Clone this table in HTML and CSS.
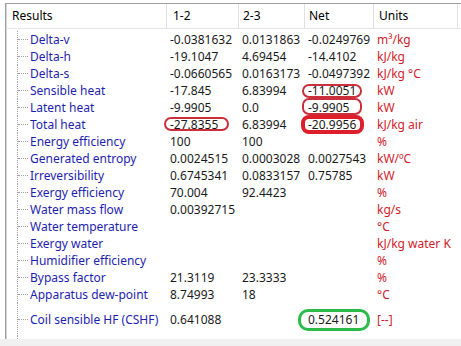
FILE: index.html
```html
<!DOCTYPE html>
<html>
<head>
<meta charset="utf-8">
<link rel="stylesheet" href="styles.css">
</head>
<body>
<div class="list">
  <div class="head">
    <div class="hc">Results</div>
    <div class="hc">1-2</div>
    <div class="hc nar">2-3</div>
    <div class="hc nar">Net</div>
    <div class="hc mid">Units</div>
    <div class="hc"></div>
  </div>
  <div class="rows">
    <div class="row"><div class="name">Delta-v</div><div class="v">-0.0381632</div><div class="v">0.0131863</div><div class="v">-0.0249769</div><div class="u">m³/kg</div></div>
    <div class="row"><div class="name">Delta-h</div><div class="v">-19.1047</div><div class="v">4.69454</div><div class="v">-14.4102</div><div class="u">kJ/kg</div></div>
    <div class="row"><div class="name">Delta-s</div><div class="v">-0.0660565</div><div class="v">0.0163173</div><div class="v">-0.0497392</div><div class="u">kJ/kg °C</div></div>
    <div class="row"><div class="name">Sensible heat</div><div class="v">-17.845</div><div class="v">6.83994</div><div class="v ring ring-sens">-11.0051</div><div class="u">kW</div></div>
    <div class="row"><div class="name">Latent heat</div><div class="v">-9.9905</div><div class="v">0.0</div><div class="v ring ring-lat">-9.9905</div><div class="u">kW</div></div>
    <div class="row"><div class="name">Total heat</div><div class="v ring ring-tot1">-27.8355</div><div class="v">6.83994</div><div class="v ring ring-tot">-20.9956</div><div class="u">kJ/kg air</div></div>
    <div class="row"><div class="name">Energy efficiency</div><div class="v">100</div><div class="v">100</div><div class="v"></div><div class="u">%</div></div>
    <div class="row"><div class="name">Generated entropy</div><div class="v">0.0024515</div><div class="v">0.0003028</div><div class="v">0.0027543</div><div class="u">kW/ºC</div></div>
    <div class="row"><div class="name">Irreversibility</div><div class="v">0.6745341</div><div class="v">0.0833157</div><div class="v">0.75785</div><div class="u">kW</div></div>
    <div class="row"><div class="name">Exergy efficiency</div><div class="v">70.004</div><div class="v">92.4423</div><div class="v"></div><div class="u">%</div></div>
    <div class="row"><div class="name">Water mass flow</div><div class="v">0.00392715</div><div class="v"></div><div class="v"></div><div class="u">kg/s</div></div>
    <div class="row"><div class="name">Water temperature</div><div class="v"></div><div class="v"></div><div class="v"></div><div class="u">°C</div></div>
    <div class="row"><div class="name">Exergy water</div><div class="v"></div><div class="v"></div><div class="v"></div><div class="u">kJ/kg water K</div></div>
    <div class="row"><div class="name">Humidifier efficiency</div><div class="v"></div><div class="v"></div><div class="v"></div><div class="u">%</div></div>
    <div class="row"><div class="name">Bypass factor</div><div class="v">21.3119</div><div class="v">23.3333</div><div class="v"></div><div class="u">%</div></div>
    <div class="row"><div class="name">Apparatus dew-point</div><div class="v">8.74993</div><div class="v">18</div><div class="v"></div><div class="u">°C</div></div>
    <div class="row gap"><div class="name">Coil sensible HF (CSHF)</div><div class="v">0.641088</div><div class="v"></div><div class="v ring ring-green">0.524161</div><div class="u">[--]</div></div>
    <div class="row blank"></div>
  </div>
</div>
<div class="foot"></div>
</body>
</html>
```
FILE: styles.css
```css
html, body {
  margin: 0;
  padding: 0;
  background: #ffffff;
}
body {
  width: 461px;
  height: 346px;
  overflow: hidden;
  font-family: "Noto Sans", "Open Sans", sans-serif;
  font-size: 12px;
  color: #1a1a1a;
}
.list {
  margin: 3px 0 0 5px;
  height: 336px;
  box-sizing: border-box;
  border-top: 1px solid #a0a0a0;
  border-left: 1px solid #a0a0a0;
  box-shadow: inset 1px 0 0 #d4d4d4;
  overflow: hidden;
}
.head {
  display: grid;
  grid-template-columns: 161px 72px 66px 69px 84px 1fr;
  height: 25px;
  box-sizing: border-box;
  border-bottom: 1px solid #e5e5e5;
}
.hc {
  box-sizing: border-box;
  border-right: 1px solid #e0e0e0;
  padding-left: 6px;
  line-height: 24px;
  color: #000;
  white-space: nowrap;
}
.hc.nar { padding-left: 4px; }
.hc.mid { padding-left: 5px; }
.rows {
  padding-top: 2px;
}
.row {
  display: grid;
  grid-template-columns: 160px 72px 66px 69px 84px;
  height: 17px;
  line-height: 17px;
  position: relative;
  white-space: nowrap;
}
.row::before {
  content: "";
  position: absolute;
  left: 11px;
  top: 0;
  bottom: 0;
  border-left: 1px dotted #a0a0a0;
}
.row.gap {
  height: 25px;
  padding-top: 8px;
}
.name {
  position: relative;
  padding-left: 24px;
  color: #1e1eb0;
}
.name::before {
  content: "";
  position: absolute;
  left: 12px;
  width: 10px;
  top: 8px;
  border-top: 1px dotted #a0a0a0;
}
.v {
  position: relative;
  padding-left: 4px;
}
.u {
  padding-left: 4px;
  color: #d21c2c;
}
.ring::after {
  content: "";
  position: absolute;
  box-sizing: border-box;
  border: 2px solid #c9303c;
  border-radius: 7px;
}
.ring-sens::after { left: -2px; top: 2px; width: 60px; height: 14px; }
.ring-lat::after { left: -2px; top: -1px; width: 60px; height: 17px; }
.ring-tot1::after { left: -2px; top: 1px; width: 65px; height: 14px; }
.ring-tot::after {
  left: -3px; top: -1px; width: 63px; height: 19px;
  border: 4px solid #dc1f2a;
  border-radius: 8px;
}
.ring-green::after {
  left: -6px; top: -2px; width: 72px; height: 22px;
  border: 3px solid #2cbb48;
  border-radius: 10px;
}
.foot {
  height: 7px;
  background: #f0f0f0;
}
```
